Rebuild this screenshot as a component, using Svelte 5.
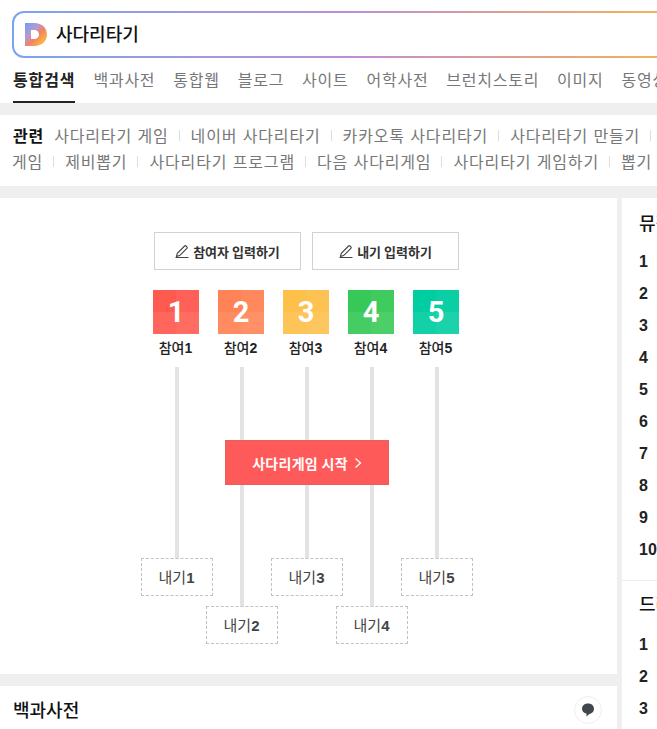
<script>
	const tabs = ['백과사전', '통합웹', '블로그', '사이트', '어학사전', '브런치스토리', '이미지', '동영상'];
	const row1 = ['사다리타기 게임', '네이버 사다리타기', '카카오톡 사다리타기', '사다리타기 만들기'];
	const row2 = ['게임', '제비뽑기', '사다리타기 프로그램', '다음 사다리게임', '사다리타기 게임하기', '뽑기'];
	const players = [
		{ n: 1, color: '#ff5a50' },
		{ n: 2, color: '#ff8355' },
		{ n: 3, color: '#fdc04a' },
		{ n: 4, color: '#37c957' },
		{ n: 5, color: '#00cda0' }
	];
	const ranks = [1, 2, 3, 4, 5, 6, 7, 8, 9, 10];
</script>

<div class="page">
	<header>
		<div class="search">
			<div class="search-inner">
				<svg class="logo" width="22" height="23" viewBox="0 0 22 23">
					<defs>
						<linearGradient id="dlogo" x1="0" y1="0" x2="1" y2="1">
							<stop offset="0" stop-color="#6a9ff5" />
							<stop offset="0.35" stop-color="#b49bd0" />
							<stop offset="0.55" stop-color="#f3806a" />
							<stop offset="0.75" stop-color="#f6a94a" />
							<stop offset="1" stop-color="#f9d63c" />
						</linearGradient>
					</defs>
					<path fill="url(#dlogo)" fill-rule="evenodd" d="M0 0h9.500C17 0 22 5 22 11.500S17 23 9.500 23H0zM6 7v9h3c3 0 5-2 5-4.500S12 7 9 7z" />
				</svg>
				<span class="query">사다리타기</span>
			</div>
		</div>
		<nav class="tabs">
			<span class="tab active">통합검색</span>
			{#each tabs as t}
				<span class="tab">{t}</span>
			{/each}
		</nav>
	</header>

	<section class="related">
		<div class="rel-row">
			<strong>관련</strong>
			{#each row1 as r, i}
				{#if i}<i></i>{/if}<span>{r}</span>
			{/each}
			<i></i>
		</div>
		<div class="rel-row">
			{#each row2 as r, i}
				{#if i}<i></i>{/if}<span>{r}</span>
			{/each}
			<i></i>
		</div>
	</section>

	<div class="columns">
		<main>
			<section class="ladder">
				<div class="inputs">
					<button class="input-btn">
						<svg width="14" height="14" viewBox="0 0 14 14" fill="none" stroke="#444" stroke-width="1.1"><path d="M1.500 12.500 2.300 9.300 9.600 2a1 1 0 0 1 1.400 0l.9.9a1 1 0 0 1 0 1.400l-7.300 7.300zM.5 13.500h13" /></svg>
						참여자 입력하기
					</button>
					<button class="input-btn">
						<svg width="14" height="14" viewBox="0 0 14 14" fill="none" stroke="#444" stroke-width="1.1"><path d="M1.500 12.500 2.300 9.300 9.600 2a1 1 0 0 1 1.400 0l.9.9a1 1 0 0 1 0 1.400l-7.300 7.300zM.5 13.500h13" /></svg>
						내기 입력하기
					</button>
				</div>
				<div class="board">
					{#each players as p}
						<div class="col" class:low={p.n % 2 === 0}>
							<div class="tile" style="--c: {p.color}">{p.n}</div>
							<div class="who">참여<b>{p.n}</b></div>
							<div class="line"></div>
							<div class="bet">내기<b>{p.n}</b></div>
						</div>
					{/each}
					<button class="start">사다리게임 시작 <svg width="8" height="12" viewBox="0 0 8 12" fill="none" stroke="#fff" stroke-width="1.300"><path d="m1.500 1.500 5 4.500-5 4.500" /></svg></button>
				</div>
			</section>
			<section class="dict">
				<h2>백과사전</h2>
				<span class="talk">
					<svg width="16" height="16" viewBox="0 0 16 16"><path fill="#42474d" d="M8 1.500c3.500 0 6 2.200 6 5.300 0 2.700-1.900 4.700-4.500 5.100L6.300 14.500l.3-2.700C3.900 11.300 2 9.400 2 6.800c0-3.100 2.500-5.300 6-5.300z" /></svg>
				</span>
			</section>
		</main>
		<aside>
			<section class="side first">
				<h3>뮤직 차트</h3>
				<ol>
					{#each ranks as r}<li>{r}</li>{/each}
				</ol>
			</section>
			<section class="side second">
				<h3>드라마 순위</h3>
				<ol>
					{#each ranks.slice(0, 3) as r}<li>{r}</li>{/each}
				</ol>
			</section>
		</aside>
	</div>
</div>

<style>
	:global(body) {
		margin: 0;
		background: #fff;
	}

	.page {
		width: 657px;
		height: 729px;
		overflow: hidden;
		font-family: 'Noto Sans CJK KR', 'Liberation Sans', sans-serif;
		color: #222;
		background: #efefef;
	}

	header {
		background: #fff;
		height: 103px;
		padding-top: 11px;
		box-sizing: border-box;
		overflow: hidden;
	}

	.search {
		margin-left: 12px;
		width: 700px;
		height: 47px;
		padding: 2px;
		box-sizing: border-box;
		border-radius: 12px;
		background: linear-gradient(90deg, #7ba4ee 0%, #c08fd0 50%, #f0b060 90%, #f3b35c 100%);
	}

	.search-inner {
		height: 100%;
		background: #fff;
		border-radius: 10px;
		display: flex;
		align-items: center;
		padding-left: 11px;
		gap: 9px;
	}

	.query {
		font-size: 18px;
		font-weight: 500;
		color: #111;
		margin-bottom: 3px;
	}

	.tabs {
		display: flex;
		gap: 18px;
		margin: 0 0 0 13px;
		white-space: nowrap;
		height: 45px;
	}

	.tab {
		font-size: 16px;
		letter-spacing: 0.74px;
		color: #777;
		line-height: 42px;
		box-sizing: border-box;
		height: 45px;
	}

	.tab.active {
		color: #222;
		font-weight: 700;
		letter-spacing: 0.9px;
		border-bottom: 2px solid #222;
	}

	.related {
		margin-top: 12px;
		background: #fff;
		height: 71px;
		padding: 7px 0 0 12px;
		box-sizing: border-box;
		overflow: hidden;
	}

	.rel-row {
		display: flex;
		align-items: center;
		white-space: nowrap;
		height: 26px;
		font-size: 16px;
		letter-spacing: 0.85px;
		word-spacing: 1px;
		color: #777;
	}

	.rel-row strong {
		color: #111;
		font-weight: 700;
		margin-left: 1px;
		margin-right: 10px;
	}

	.rel-row i {
		width: 1px;
		height: 11px;
		background: #ddd;
		margin: 0 11px 0 10px;
		flex: none;
	}

	.columns {
		margin-top: 12px;
		display: flex;
		gap: 5px;
	}

	main {
		width: 617px;
		flex: none;
	}

	.ladder {
		background: #fff;
		height: 476px;
		box-sizing: border-box;
		padding: 34px 4px 0 0;
	}

	.inputs {
		display: flex;
		justify-content: center;
		gap: 11px;
	}

	.input-btn {
		width: 147px;
		height: 38px;
		background: #fff;
		border: 1px solid #d2d2d2;
		font: inherit;
		font-size: 13px;
		font-weight: 700;
		color: #333;
		display: flex;
		align-items: center;
		justify-content: center;
		gap: 4px;
		padding: 0;
	}

	.board {
		position: relative;
		display: flex;
		justify-content: center;
		margin-top: 20px;
		height: 354px;
	}

	.col {
		width: 65px;
		display: flex;
		flex-direction: column;
		align-items: center;
	}

	.tile {
		width: 46px;
		height: 44px;
		flex: none;
		margin-right: 1px;
		background:
			linear-gradient(90deg, transparent 50%, rgba(255, 255, 255, 0.04) 50%),
			linear-gradient(180deg, transparent 50%, rgba(255, 255, 255, 0.07) 50%),
			var(--c);
		color: #fff;
		font-family: 'Roboto', sans-serif;
		font-weight: 700;
		font-size: 29px;
		line-height: 44px;
		text-align: center;
	}

	.who {
		font-size: 14px;
		font-weight: 500;
		color: #222;
		height: 33px;
		line-height: 27px;
		flex: none;
		margin-right: 2px;
	}

	.who b,
	.bet b {
		font-family: 'Liberation Sans', sans-serif;
		font-weight: 700;
	}

	.line {
		width: 4px;
		flex: 1;
		background: #e3e3e3;
	}

	.bet {
		width: 72px;
		height: 38px;
		flex: none;
		box-sizing: border-box;
		border: 1px dashed #c2c2c2;
		font-size: 15px;
		color: #444;
		text-align: center;
		line-height: 35px;
		margin-bottom: 48px;
		background: #fff;
	}

	.col.low .bet {
		margin-bottom: 0;
	}

	.start {
		position: absolute;
		left: 225px;
		top: 150px;
		width: 164px;
		height: 45px;
		background: #ff5a5a;
		border: 1px solid #e85e5e;
		color: #fff;
		font: inherit;
		font-size: 14px;
		font-weight: 700;
		letter-spacing: 0.3px;
		display: flex;
		align-items: center;
		justify-content: center;
		gap: 6px;
		padding: 0;
	}

	.dict {
		margin-top: 12px;
		background: #fff;
		height: 60px;
		display: flex;
		justify-content: space-between;
		padding: 10px 15px 0 13px;
		box-sizing: border-box;
	}

	.dict h2 {
		margin: 0;
		font-size: 18px;
		font-weight: 500;
		color: #111;
		line-height: 27px;
	}

	.talk {
		width: 26px;
		height: 26px;
		border: 1px solid #eee;
		border-radius: 50%;
		display: flex;
		align-items: center;
		justify-content: center;
	}

	aside {
		width: 200px;
		flex: none;
		background: #fff;
		height: 540px;
	}

	.side {
		padding: 13px 0 0 17px;
	}

	.side.first {
		height: 383px;
		box-sizing: border-box;
		border-bottom: 1px solid #eee;
	}

	.side.second {
		padding-top: 11px;
	}

	.side h3 {
		margin: 0 0 13px;
		font-size: 18px;
		font-weight: 500;
		color: #111;
		line-height: 22px;
		white-space: nowrap;
	}

	.side.second h3 {
		margin-bottom: 15px;
	}

	ol {
		list-style: none;
		margin: 0;
		padding: 0;
	}

	li {
		height: 32px;
		line-height: 32px;
		font-family: 'Liberation Sans', sans-serif;
		font-weight: 700;
		font-size: 16px;
		color: #222;
	}
</style>
